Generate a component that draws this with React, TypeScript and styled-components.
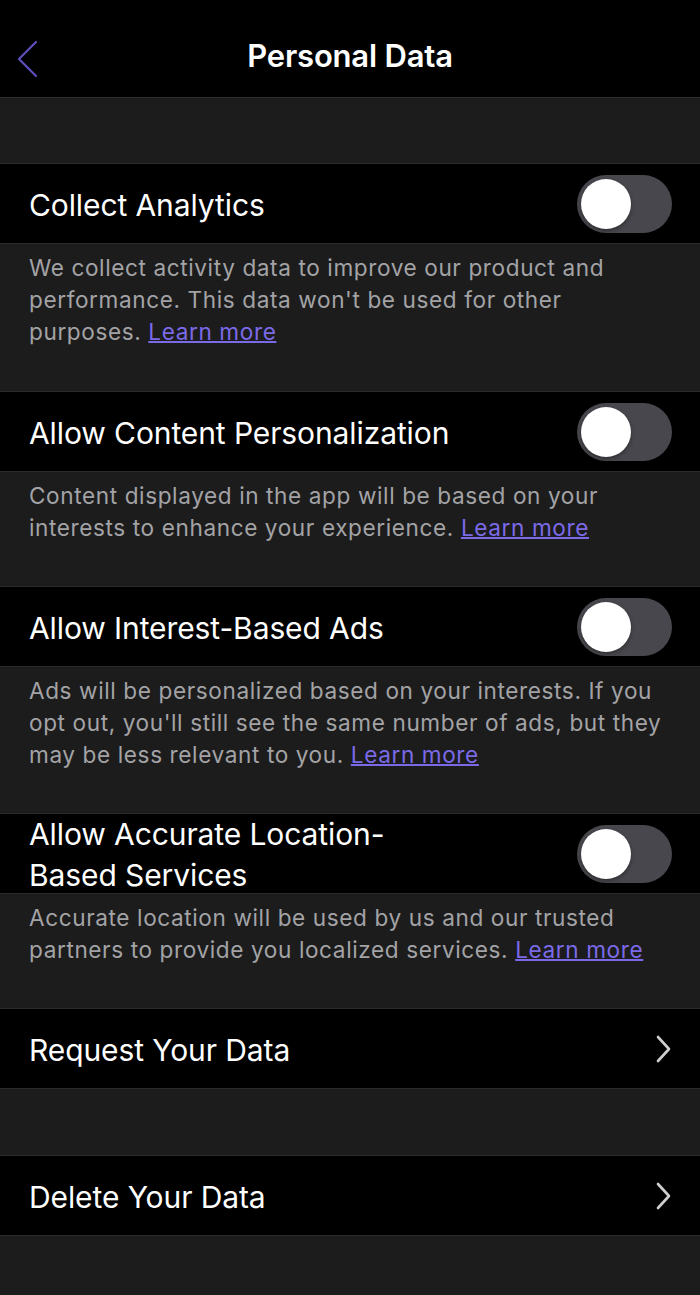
import React from "react";
import styled, { createGlobalStyle } from "styled-components";

const Global = createGlobalStyle`
  html, body { margin: 0; padding: 0; background: #1c1c1d; }
  body { font-family: Inter, "Noto Sans", sans-serif; -webkit-font-smoothing: antialiased; }
`;

const Page = styled.div`
  width: 700px;
  min-height: 1295px;
  background: #1c1c1d;
  display: flex;
  flex-direction: column;
`;

const Header = styled.header`
  height: 98px;
  box-sizing: border-box;
  background: #000;
  border-bottom: 1px solid #2c2c2e;
  display: flex;
  align-items: center;
  justify-content: center;
  position: relative;
`;

const BackButton = styled.button`
  position: absolute;
  left: 10px;
  top: 36px;
  background: none;
  border: 0;
  padding: 0;
  width: 34px;
  height: 46px;
  display: flex;
  align-items: center;
  justify-content: center;
`;

const Title = styled.h1`
  margin: 0;
  color: #fff;
  font-size: 31px;
  font-weight: 600;
  letter-spacing: -0.2px;
  padding-top: 14px;
`;

const Spacer = styled.div<{ h: number }>`
  height: ${(p) => p.h}px;
  flex-shrink: 0;
`;

const Row = styled.div`
  height: 81px;
  flex-shrink: 0;
  background: #000;
  border-top: 1px solid #2a2a2c;
  border-bottom: 1px solid #2a2a2c;
  display: flex;
  align-items: center;
  justify-content: space-between;
  padding: 3px 28px 0 29px;
  box-sizing: border-box;
`;

const RowLabel = styled.div<{ narrow?: boolean }>`
  color: #fff;
  font-size: 30px;
  line-height: 41px;
  letter-spacing: -0.1px;
  max-width: ${(p) => (p.narrow ? "400px" : "none")};
`;

const Toggle = styled.div`
  width: 95px;
  height: 58px;
  border-radius: 29px;
  background: #48474d;
  padding: 4px;
  box-sizing: border-box;
  display: flex;
  align-items: center;
  flex-shrink: 0;
  margin-top: -3px;
`;

const Knob = styled.div`
  width: 50px;
  height: 50px;
  border-radius: 50%;
  background: #fff;
  box-shadow: 0 2px 4px rgba(0, 0, 0, 0.35);
`;

const Description = styled.p`
  margin: 0;
  padding: 8px 30px 42px 29px;
  color: #a3a3a6;
  font-size: 22.6px;
  line-height: 32px;
  letter-spacing: 0.6px;
`;

const Link = styled.a`
  color: #7b6ae8;
  text-decoration: underline;
  text-decoration-thickness: 1.5px;
  white-space: nowrap;
`;

const Chevron = () => (
  <svg width="18" height="28" viewBox="0 0 18 28" style={{ marginTop: -3 }}>
    <path d="M4 2 L15 14 L4 26" fill="none" stroke="#cfcfd2" strokeWidth="2.6" strokeLinecap="round" strokeLinejoin="round" />
  </svg>
);

const BackChevron = () => (
  <svg width="26" height="40" viewBox="0 0 26 40">
    <path d="M22 3 L5 20 L22 37" fill="none" stroke="#5e4fbf" strokeWidth="2.2" strokeLinecap="round" strokeLinejoin="round" />
  </svg>
);

type ToggleItem = { label: string; desc: string; narrow?: boolean; extra?: number };

const items: ToggleItem[] = [
  {
    label: "Collect Analytics",
    desc: "We collect activity data to improve our product and performance. This data won't be used for other purposes.",
    extra: 1,
  },
  {
    label: "Allow Content Personalization",
    desc: "Content displayed in the app will be based on your interests to enhance your experience.",
  },
  {
    label: "Allow Interest-Based Ads",
    desc: "Ads will be personalized based on your interests. If you opt out, you'll still see the same number of ads, but they may be less relevant to you.",
  },
  {
    label: "Allow Accurate Location-Based Services",
    desc: "Accurate location will be used by us and our trusted partners to provide you localized services.",
    narrow: true,
  },
];

export default function App() {
  return (
    <Page>
      <Global />
      <Header>
        <BackButton aria-label="Back">
          <BackChevron />
        </BackButton>
        <Title>Personal Data</Title>
      </Header>
      <Spacer h={65} />
      {items.map((it) => (
        <React.Fragment key={it.label}>
          <Row>
            <RowLabel narrow={it.narrow}>{it.label}</RowLabel>
            <Toggle>
              <Knob />
            </Toggle>
          </Row>
          <Description>
            {it.desc} <Link>Learn more</Link>
          </Description>
          {it.extra ? <Spacer h={it.extra} /> : null}
        </React.Fragment>
      ))}
      <Row>
        <RowLabel>Request Your Data</RowLabel>
        <Chevron />
      </Row>
      <Spacer h={66} />
      <Row>
        <RowLabel>Delete Your Data</RowLabel>
        <Chevron />
      </Row>
    </Page>
  );
}
